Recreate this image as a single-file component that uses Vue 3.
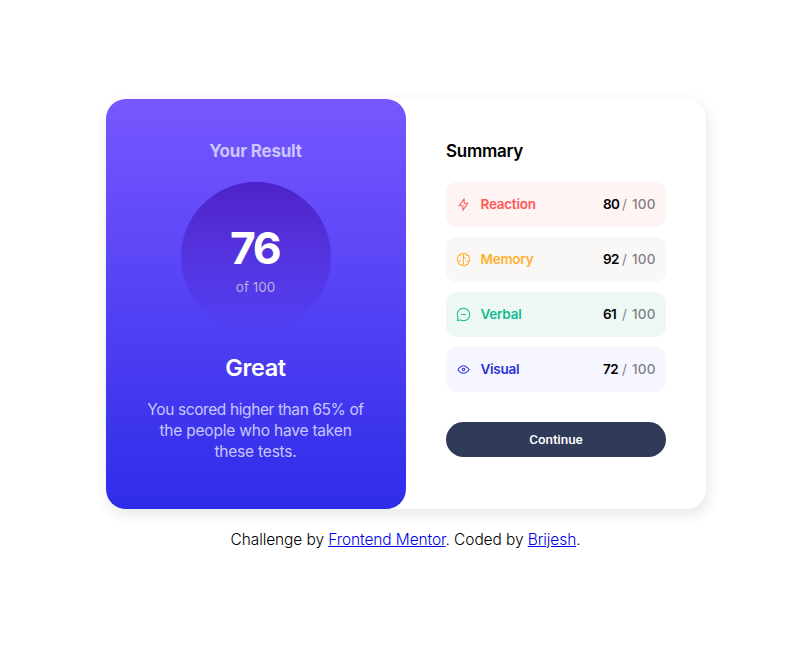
<script setup>
const rows = [
  {
    name: 'Reaction', key: 'reaction', score: 80,
    paths: ['M10.833 8.333V2.5l-6.666 9.167h5V17.5l6.666-9.167h-5Z'],
  },
  {
    name: 'Memory', key: 'memory', score: 92,
    paths: [
      'M5.833 11.667a2.5 2.5 0 1 0 .834 4.858',
      'M3.553 13.004a3.333 3.333 0 0 1-.728-5.53m.025-.067a2.083 2.083 0 0 1 2.983-2.824m.199.054A2.083 2.083 0 1 1 10 3.75v12.917a1.667 1.667 0 0 1-3.333 0M10 5.833a2.5 2.5 0 0 0 2.5 2.5m1.667 3.334a2.5 2.5 0 1 1-.834 4.858',
      'M16.447 13.004a3.334 3.334 0 0 0 .728-5.53m-.025-.067a2.083 2.083 0 0 0-2.983-2.824M10 3.75a2.085 2.085 0 0 1 2.538-2.033 2.084 2.084 0 0 1 1.43 2.92m-.635 12.03a1.667 1.667 0 0 1-3.333 0',
    ],
  },
  {
    name: 'Verbal', key: 'verbal', score: 61,
    paths: ['M7.5 10h5M10 18.333A8.333 8.333 0 1 0 1.667 10c0 1.518.406 2.942 1.115 4.167l-.699 3.75 3.75-.699A8.295 8.295 0 0 0 10 18.333Z'],
  },
  {
    name: 'Visual', key: 'visual', score: 72,
    paths: [
      'M10 11.667a1.667 1.667 0 1 0 0-3.334 1.667 1.667 0 0 0 0 3.334Z',
      'M17.5 10c-1.574 2.492-4.402 5-7.5 5s-5.926-2.508-7.5-5C4.416 7.632 6.66 5 10 5s5.584 2.632 7.5 5Z',
    ],
  },
]
</script>

<template>
  <div class="page">
    <main class="card">
      <section class="result">
        <h2 class="title">Your Result</h2>
        <div class="circle">
          <span class="score">76</span>
          <span class="of">of 100</span>
        </div>
        <h1 class="grade">Great</h1>
        <p class="text">
          <span class="lead">You scored higher than 65% of</span><br />
          the people who have taken<br />
          these tests.
        </p>
      </section>
      <section class="summary">
        <h2 class="heading">Summary</h2>
        <ul class="rows">
          <li v-for="r in rows" :key="r.key" class="row" :class="r.key">
            <svg class="icon" viewBox="0 0 20 20" fill="none" stroke="currentColor" stroke-width="1.35" stroke-linecap="round" stroke-linejoin="round">
              <path v-for="p in r.paths" :key="p" :d="p" />
            </svg>
            <span class="name">{{ r.name }}</span>
            <span class="value"><b>{{ r.score }}</b><span class="slash">/</span><span class="max">100</span></span>
          </li>
        </ul>
        <button class="continue">Continue</button>
      </section>
    </main>
    <footer class="footer">Challenge by <a href="#">Frontend Mentor</a>. Coded by <a href="#">Brijesh</a>.</footer>
  </div>
</template>

<style>
body { margin: 0; background: #fff; }
</style>

<style scoped>
.page {
  height: 649px;
  box-sizing: border-box;
  padding-top: 99px;
  display: flex;
  flex-direction: column;
  align-items: center;
  font-family: Inter, "Liberation Sans", sans-serif;
  color: #000;
}
.card {
  display: flex;
  width: 600px;
  height: 410px;
  margin-right: -1px;
  border-radius: 20px;
  background: #fff;
  box-shadow: 2px 5px 15px rgba(0, 0, 0, 0.1);
}
h1, h2, p, ul { margin: 0; padding: 0; }
.result {
  width: 300px;
  box-sizing: border-box;
  padding-top: 41px;
  display: flex;
  flex-direction: column;
  align-items: center;
  border-radius: 20px;
  background: linear-gradient(#7857ff, #2f2ce9);
  color: #c8c7ff;
  white-space: nowrap;
}
.title { font-size: 17px; line-height: 23px; font-weight: 700; letter-spacing: -0.2px; padding-right: 1px; }
.circle {
  width: 150px;
  height: 150px;
  margin-top: 19px;
  border-radius: 50%;
  background: linear-gradient(#4d21c9, rgba(37, 33, 201, 0));
  display: flex;
  flex-direction: column;
  align-items: center;
}
.score { margin-top: 37px; font-size: 44.5px; line-height: 59px; font-weight: 700; color: #fff; letter-spacing: -2.6px; padding-right: 3px; }
.of { font-size: 13.5px; line-height: 18px; color: #b9b0d8; padding-right: 1px; }
.grade { margin-top: 20px; font-size: 23.5px; line-height: 31px; font-weight: 600; color: #fff; letter-spacing: -0.4px; padding-right: 1px; }
.text { margin-top: 16px; padding-right: 1px; font-size: 15.5px; line-height: 21px; text-align: center; letter-spacing: -0.2px; }
.lead { letter-spacing: -0.4px; }
.summary { width: 220px; padding: 41px 40px 0; }
.heading { font-size: 17px; line-height: 23px; font-weight: 600; letter-spacing: -0.25px; }
.rows { list-style: none; margin-top: 19px; display: grid; gap: 10px; }
.row {
  height: 45px;
  box-sizing: border-box;
  padding: 0 10px;
  display: flex;
  align-items: center;
  border-radius: 10px;
  font-size: 13.5px;
  line-height: 18px;
}
.icon { width: 15px; height: 15px; margin-right: 9.5px; }
.name { padding-bottom: 2px; font-weight: 600; letter-spacing: -0.25px; }
.value { margin-left: auto; padding-bottom: 2px; display: flex; color: #828086; font-weight: 500; }
.value b { width: 19px; color: #000; font-weight: 600; letter-spacing: -0.6px; }
.slash { width: 10px; font-weight: 400; }
.max { width: 24px; letter-spacing: 0.2px; }
.reaction { background: #fff4f4; color: #ff5757; }
.memory { background: #f9f8f6; color: #ffb02e; }
.verbal { background: #eef9f6; color: #12bb92; }
.visual { background: #f5f6ff; color: #2530d6; }
.continue {
  display: block;
  width: 220px;
  height: 35px;
  margin-top: 30px;
  padding: 0;
  border: 0;
  border-radius: 18px;
  background: #303b59;
  color: #fff;
  font: 500 13.33px/18px Roboto, sans-serif;
}
.footer { margin-top: 20px; font-size: 15.5px; line-height: 21px; letter-spacing: -0.1px; font-weight: 300; white-space: nowrap; }
.footer a { color: #0000ee; text-decoration: underline; }
</style>
